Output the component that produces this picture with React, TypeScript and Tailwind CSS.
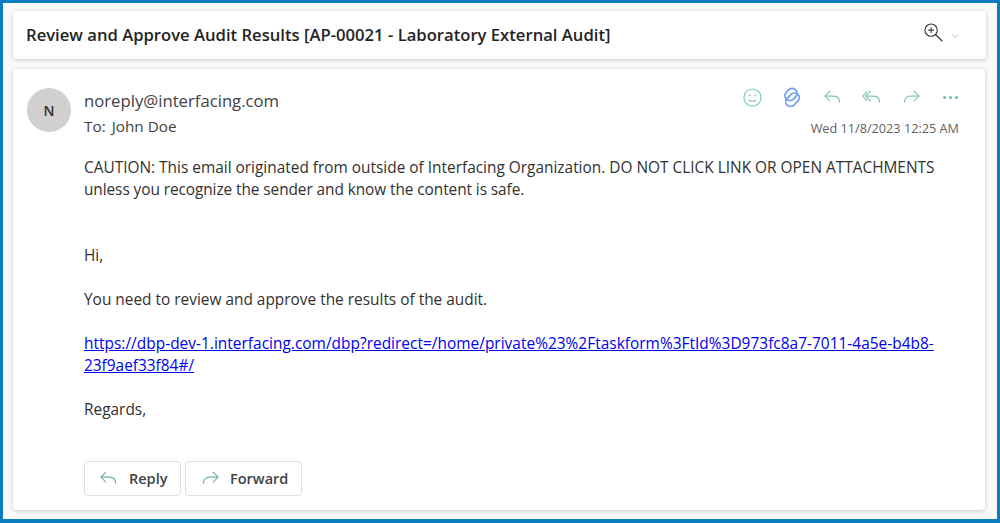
import { ChevronDown } from "lucide-react";

function ReplyIcon({ className }: { className?: string }) {
  return (
    <svg viewBox="0 0 20 20" fill="none" stroke="currentColor" strokeWidth="1.200" className={className}>
      <path d="M7.500 3 2 8.500l5.500 5.500M2 8.500h9c3.800 0 6.500 2.500 6.500 7" />
    </svg>
  );
}

function ReplyAllIcon({ className }: { className?: string }) {
  return (
    <svg viewBox="0 0 20 20" fill="none" stroke="currentColor" strokeWidth="1.200" className={className}>
      <path d="M5.500 3.500 1 8.500l4.500 5M9 3 4 8.500 9 14M4 8.500h8c3.800 0 6.500 2.500 6.500 7" />
    </svg>
  );
}

function ForwardIcon({ className }: { className?: string }) {
  return (
    <svg viewBox="0 0 20 20" fill="none" stroke="currentColor" strokeWidth="1.200" className={className}>
      <path d="M12.500 3 18 8.500 12.500 14M18 8.500H9c-3.800 0-6.500 2.500-6.500 7" />
    </svg>
  );
}

function SmileIcon({ className }: { className?: string }) {
  return (
    <svg viewBox="0 0 20 20" fill="none" stroke="currentColor" strokeWidth="1.200" className={className}>
      <circle cx="10" cy="10" r="9" />
      <path d="M6.300 12.200c.8 1.300 2.200 2 3.700 2s2.900-.7 3.700-2" />
      <circle cx="7.200" cy="7.800" r="1" fill="currentColor" stroke="none" />
      <circle cx="12.800" cy="7.800" r="1" fill="currentColor" stroke="none" />
    </svg>
  );
}

function LoopIcon({ className }: { className?: string }) {
  return (
    <svg viewBox="0 0 20 20" fill="none" stroke="#6f9cf2" strokeWidth="1.700" className={className}>
      <rect x="2.500" y="2.500" width="13" height="10" rx="5" transform="rotate(-45 9 7.500)" />
      <rect x="3" y="8" width="15" height="9.500" rx="4.750" transform="rotate(-45 10.500 12.750)" />
    </svg>
  );
}

function ZoomIcon({ className }: { className?: string }) {
  return (
    <svg viewBox="0 0 20 20" fill="none" stroke="#3b3a39" strokeWidth="1.200" className={className}>
      <circle cx="7.500" cy="7.500" r="6.500" />
      <path d="M7.500 4.500v6M4.500 7.500h6" />
      <path d="M12.300 12.300l7 7" strokeWidth="1.400" />
    </svg>
  );
}

export default function App() {
  return (
    <div className="h-[523px] w-[1000px] overflow-hidden border-[3px] border-b-[4px] border-[#0a7cc0] bg-[#faf9f8] px-[10px] pt-[8px] font-['Open_Sans',sans-serif] text-[#323130]">
      <header className="flex h-[48px] w-[973px] items-center justify-between rounded-[4px] bg-white pl-[13px] pr-[25px] shadow-[0_1px_4px_rgba(0,0,0,0.2)]">
        <h1 className="pt-[1px] text-[16.650px] font-semibold text-[#242424]">
          Review and Approve Audit Results [AP-00021 - Laboratory External Audit]
        </h1>
        <div className="flex items-center gap-[6px] pb-[5px]">
          <ZoomIcon className="h-[19px] w-[19px]" />
          <ChevronDown className="mt-[7px] h-[12px] w-[12px] text-[#8a8886]" strokeWidth={1.200} />
        </div>
      </header>

      <main className="mt-[10px] h-[441px] w-[972px] rounded-[4px] bg-white pl-[14px] pr-[26px] pt-[19px] shadow-[0_1px_4px_rgba(0,0,0,0.2)]">
        <div className="flex h-[69px] items-start">
          <div className="flex h-[44px] w-[44px] items-center justify-center rounded-full bg-[#d2d0ce] text-[14px] font-semibold text-[#323130]">
            N
          </div>
          <div className="ml-[13px] flex-1">
            <div className="mt-[2px] text-[16.700px] leading-[22px] text-[#424242]">noreply@interfacing.com</div>
            <div className="mt-[4px] text-[15.300px] leading-[20px] text-[#424242]">
              To:<span className="ml-[6px]">John Doe</span>
            </div>
          </div>
          <div className="flex flex-col items-end">
            <div className="mr-[-1px] mt-[-1px] flex items-center gap-[20.500px] text-[#7fc8ae]">
              <SmileIcon className="h-[19px] w-[19px]" />
              <LoopIcon className="h-[20px] w-[20px]" />
              <ReplyIcon className="h-[19px] w-[19px]" />
              <ReplyAllIcon className="h-[19px] w-[19px]" />
              <ForwardIcon className="h-[19px] w-[19px]" />
              <div className="flex w-[19px] items-center justify-center gap-[3px]">
                <span className="h-[3px] w-[3px] rounded-full bg-[#5fbfa5]" />
                <span className="h-[3px] w-[3px] rounded-full bg-[#5fbfa5]" />
                <span className="h-[3px] w-[3px] rounded-full bg-[#5fbfa5]" />
              </div>
            </div>
            <div className="mt-[13px] text-[12.700px] leading-[16px] text-[#616161]">Wed 11/8/2023 12:25 AM</div>
          </div>
        </div>

        <div className="ml-[57px] text-[15.410px] leading-[22px] text-[#323130]">
          <p>
            CAUTION: This email originated from outside of Interfacing Organization. DO NOT CLICK LINK OR OPEN ATTACHMENTS
            <br />
            <span className="tracking-[-0.08px]">unless you recognize the sender and know the content is safe.</span>
          </p>
          <p className="mt-[44px]">Hi,</p>
          <p className="mt-[22px]">You need to review and approve the results of the audit.</p>
          <p className="mt-[22px]">
            <a href="#" className="text-[#0000ee] underline">
              <span className="tracking-[0.03px]">
                https://dbp-dev-1.interfacing.com/dbp?redirect=/home/private%23%2Ftaskform%3FtId%3D973fc8a7-7011-4a5e-b4b8-
              </span>
              <br />
              23f9aef33f84#/
            </a>
          </p>
          <p className="mt-[22px]">Regards,</p>
        </div>

        <div className="ml-[57px] mt-[40px] flex gap-[4px]">
          <button className="flex h-[35px] w-[97px] items-center rounded-[4px] border border-[#e1dfdd] pl-[14px] text-[14.500px] font-semibold text-[#424242]">
            <ReplyIcon className="h-[19px] w-[19px] text-[#6fb5a5]" />
            <span className="ml-[11px]">Reply</span>
          </button>
          <button className="flex h-[35px] w-[117px] items-center rounded-[4px] border border-[#e1dfdd] pl-[15px] text-[14.500px] font-semibold text-[#424242]">
            <ForwardIcon className="h-[19px] w-[19px] text-[#6fb5a5]" />
            <span className="ml-[10px]">Forward</span>
          </button>
        </div>
      </main>
    </div>
  );
}
